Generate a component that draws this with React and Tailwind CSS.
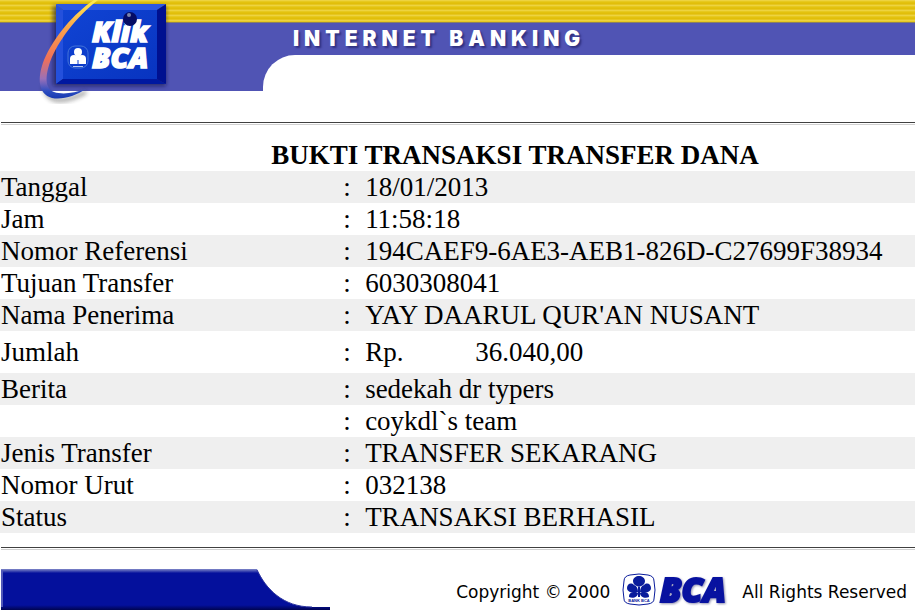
const rows = [
  { label: "Tanggal", value: "18/01/2013" },
  { label: "Jam", value: "11:58:18" },
  { label: "Nomor Referensi", value: "194CAEF9-6AE3-AEB1-826D-C27699F38934" },
  { label: "Tujuan Transfer", value: "6030308041" },
  { label: "Nama Penerima", value: "YAY DAARUL QUR'AN NUSANT" },
  { label: "Jumlah", currency: "Rp.", value: "36.040,00" },
  { label: "Berita", value: "sedekah dr typers" },
  { label: "", value: "coykdl`s team" },
  { label: "Jenis Transfer", value: "TRANSFER SEKARANG" },
  { label: "Nomor Urut", value: "032138" },
  { label: "Status", value: "TRANSAKSI BERHASIL" },
];

function KlikBcaLogo() {
  return (
    <svg
      width="140"
      height="110"
      viewBox="30 0 140 110"
      role="img"
      aria-label="Klik BCA"
      className="absolute top-0 left-[30px]"
    >
      <defs>
        <linearGradient id="swoosh" x1="0" y1="0" x2="0" y2="1">
          <stop offset="0" stopColor="#ffee50" />
          <stop offset="0.3" stopColor="#f9a04a" />
          <stop offset="0.6" stopColor="#f07058" />
          <stop offset="0.8" stopColor="#9a70b8" />
          <stop offset="0.93" stopColor="#2a4cc0" />
          <stop offset="1" stopColor="#1838b0" />
        </linearGradient>
        <linearGradient id="face" x1="0" y1="0" x2="1" y2="1">
          <stop offset="0" stopColor="#1044d4" />
          <stop offset="1" stopColor="#0834c0" />
        </linearGradient>
        <filter id="soft" x="-20%" y="-20%" width="140%" height="140%">
          <feGaussianBlur stdDeviation="2" />
        </filter>
      </defs>
      <rect x="53" y="6" width="113" height="80" fill="#10103c" opacity="0.6" filter="url(#soft)" />
      <path d="M44 86 C48 104 64 104 86 92" fill="none" stroke="#222" strokeWidth="4" opacity="0.4" filter="url(#soft)" />
      <path d="M56 4 H166 L157 10 H63 Z" fill="#2c58e4" />
      <path d="M56 4 L63 10 V79 L56 84 Z" fill="#2450dc" />
      <path d="M166 4 V84 L157 79 V10 Z" fill="#001090" />
      <path d="M56 84 L63 79 H157 L166 84 Z" fill="#0018a0" />
      <rect x="63" y="10" width="94" height="69" fill="url(#face)" />
      <path
        d="M94 0 C74 13 54 37 44 60 C37 78 38 94 52 98 C63 100 75 96 86 89 C74 93 63 95 54 92 C45 88 45 77 50 62 C58 41 76 17 98 0 Z"
        fill="url(#swoosh)"
      />
      <rect x="68" y="46" width="20" height="22" rx="7" fill="none" stroke="#4272d8" />
      <g fill="#fff">
        <circle cx="78" cy="52" r="4" />
        <circle cx="74" cy="59" r="4" />
        <circle cx="82" cy="59" r="4" />
        <path d="M78 54 L86 59 V64 H70 V59 Z" />
        <rect x="73" y="66" width="10" height="1" opacity="0.7" />
        <text
          fontFamily="'Open Sans', sans-serif"
          fontWeight="800"
          fontStyle="italic"
          fontSize="29"
          stroke="#fff"
          strokeWidth="1.5"
        >
          <tspan x="92" y="42">Klik</tspan>
          <tspan x="92" y="68">BCA</tspan>
        </text>
      </g>
      <path d="M78 60 V65" stroke="#0c3ccc" />
      <circle cx="130" cy="19" r="7" fill="#050c64" />
      <circle cx="129" cy="15" r="2" fill="#7d86aa" />
    </svg>
  );
}

function BcaLogo() {
  return (
    <svg width="112" height="48" viewBox="0 -9 112 48" role="img" aria-label="BCA" className="shrink-0">
      <path
        d="M8 2 Q17 0 26 2 Q32 3 32 8 Q34 17 32 26 Q32 30 26 31 Q17 33 8 31 Q2 30 2 26 Q0 17 2 8 Q2 3 8 2 Z"
        fill="none"
        stroke="#0a1c9c"
      />
      <g fill="#0a1c9c">
        <path d="M17 14 C15 13 11 12 11 8 C11 5 14 3 17 3 C20 3 23 5 23 8 C23 12 19 13 17 14 Z" />
        <path d="M16 19 C14 21 5 20 5 15 C5 11 9 9 12 12 C15 13 16 16 16 19 Z" />
        <path d="M18 19 C20 21 29 20 29 15 C29 11 25 9 22 12 C19 13 18 16 18 19 Z" />
        <path d="M16 20 C16 24 11 26 7 24 C7 21 8 19 12 20 Z" />
        <path d="M18 20 C18 24 23 26 27 24 C27 21 26 19 22 20 Z" />
        <path d="M16 14 H18 V24 H16 Z" />
      </g>
      <text x="17" y="29" fontSize="4" fontWeight="700" textAnchor="middle" fontFamily="'Liberation Sans', sans-serif" fill="#0a1c9c">
        BANK BCA
      </text>
      <text
        x="38"
        y="29"
        fontFamily="'Open Sans', sans-serif"
        fontWeight="800"
        fontStyle="italic"
        fontSize="34"
        fill="#0812a0"
        stroke="#0812a0"
        strokeWidth="2"
        className="drop-shadow-[1px_1px_1px_#9090b0]"
      >
        BCA
      </text>
    </svg>
  );
}

function Header() {
  return (
    <header className="relative">
      <div className="h-[23px] border-b border-[#8a8060] bg-[repeating-linear-gradient(to_bottom,#f0d850_0px,#e4c410_2px,#e0bc08_4px,#ecd038_5px)]" />
      <div className="flex h-[68px] bg-[#5054b4]">
        <div className="w-[263px] shrink-0" />
        <div className="flex flex-1 flex-col">
          <h1 className="h-8 pl-[30px] font-[Inter,sans-serif] text-[21px] leading-8 font-black tracking-[5px] whitespace-nowrap text-white [text-shadow:2px_2px_2px_#303080]">
            INTERNET BANKING
          </h1>
          <div className="flex-1 rounded-tl-[32px] bg-white" />
        </div>
      </div>
      <KlikBcaLogo />
    </header>
  );
}

function Receipt() {
  return (
    <table className="w-full border-collapse text-left text-[27px] leading-8">
      <caption className="pl-[115px] font-bold whitespace-nowrap">BUKTI TRANSAKSI TRANSFER DANA</caption>
      <tbody>
        {rows.map((row, index) => (
          <tr key={index} className="odd:bg-[#efefef]">
            <th scope="row" className="w-[37.5%] p-0 pl-px font-normal">
              {row.label}
            </th>
            <td className="w-[22px] p-0">:</td>
            {row.currency ? (
              <td className="p-0 py-[5px]">
                <div className="flex">
                  <span className="w-[110px]">{row.currency}</span>
                  <span>{row.value}</span>
                </div>
              </td>
            ) : (
              <td className="p-0">{row.value}</td>
            )}
          </tr>
        ))}
      </tbody>
    </table>
  );
}

function Footer() {
  return (
    <footer className="flex items-start justify-between pt-[14px]">
      <svg width="330" height="48" viewBox="0 -5 330 48" aria-hidden="true" className="shrink-0">
        <defs>
          <linearGradient id="ribbon" x1="0" y1="0" x2="0" y2="1">
            <stop offset="0" stopColor="#8088c8" />
            <stop offset="0.1" stopColor="#04109c" />
            <stop offset="0.88" stopColor="#04109c" />
            <stop offset="1" stopColor="#000450" />
          </linearGradient>
        </defs>
        <path d="M1 0 H257 C266 20 283 38 312 38 H330 V41 H1 Z" fill="url(#ribbon)" />
        <path d="M257 1 C266 20 283 38 312 38" fill="none" stroke="#3038a0" />
        <path d="M2 2 V38" stroke="#5058b8" strokeWidth="2" />
      </svg>
      <div className="flex items-center pr-2 font-['DejaVu_Sans',sans-serif] text-[17px] whitespace-nowrap">
        <span className="pt-2.5">Copyright © 2000</span>
        <span className="mr-2 ml-3">
          <BcaLogo />
        </span>
        <span className="pt-2.5">All Rights Reserved</span>
      </div>
    </footer>
  );
}

export default function App() {
  return (
    <div className="overflow-x-hidden bg-white font-['Liberation_Serif',serif] text-black">
      <Header />
      <main className="pt-[31px]">
        <hr className="mb-[14px] ml-px h-[3px] border-t border-b border-t-[#404040] border-b-[#d0d0d0]" />
        <Receipt />
        <hr className="mt-[14px] ml-px h-[3px] border-t border-b border-t-[#404040] border-b-[#d0d0d0]" />
      </main>
      <Footer />
    </div>
  );
}
